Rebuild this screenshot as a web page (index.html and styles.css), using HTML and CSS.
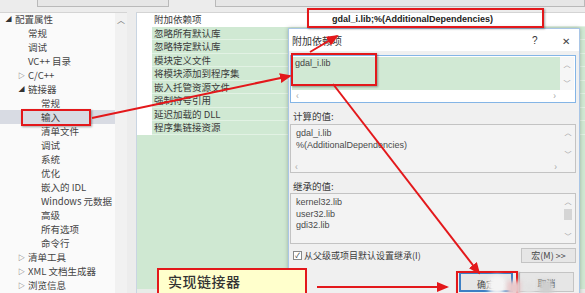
FILE: index.html
```html
<!DOCTYPE html>
<html>
<head>
    <meta charset="utf-8">
    <title>链接器 | 输入</title>
    <link rel="stylesheet" href="styles.css">
</head>

<body>
    <div class="topbar">
        <span class="top-box first"></span>
        <span class="top-box second"></span>
    </div>

    <div class="main">
        <div class="tree">
            <ul class="tree-list">
                <li class="lv0"><span class="tri open">◢</span>配置属性</li>
                <li class="lv1"><span class="tri"></span>常规</li>
                <li class="lv1"><span class="tri"></span>调试</li>
                <li class="lv1"><span class="tri"></span>VC++ 目录</li>
                <li class="lv1"><span class="tri">▷</span>C/C++</li>
                <li class="lv1"><span class="tri open">◢</span>链接器</li>
                <li class="lv2"><span class="tri"></span>常规</li>
                <li class="lv2 selected"><span class="tri"></span>输入</li>
                <li class="lv2"><span class="tri"></span>清单文件</li>
                <li class="lv2"><span class="tri"></span>调试</li>
                <li class="lv2"><span class="tri"></span>系统</li>
                <li class="lv2"><span class="tri"></span>优化</li>
                <li class="lv2"><span class="tri"></span>嵌入的 IDL</li>
                <li class="lv2"><span class="tri"></span>Windows 元数据</li>
                <li class="lv2"><span class="tri"></span>高级</li>
                <li class="lv2"><span class="tri"></span>所有选项</li>
                <li class="lv2"><span class="tri"></span>命令行</li>
                <li class="lv1"><span class="tri">▷</span>清单工具</li>
                <li class="lv1"><span class="tri">▷</span>XML 文档生成器</li>
                <li class="lv1"><span class="tri">▷</span>浏览信息</li>
            </ul>
            <div class="tree-scroll"><span class="arrow-up">︿</span></div>
        </div>

        <div class="grid">
            <div class="row head">
                <span class="indent"></span>
                <span class="name">附加依赖项</span>
                <span class="value"><b>gdal_i.lib;%(AdditionalDependencies)</b></span>
            </div>
            <div class="row"><span class="indent"></span><span class="name">忽略所有默认库</span><span class="value"></span></div>
            <div class="row"><span class="indent"></span><span class="name">忽略特定默认库</span><span class="value"></span></div>
            <div class="row"><span class="indent"></span><span class="name">模块定义文件</span><span class="value"></span></div>
            <div class="row"><span class="indent"></span><span class="name">将模块添加到程序集</span><span class="value"></span></div>
            <div class="row"><span class="indent"></span><span class="name">嵌入托管资源文件</span><span class="value"></span></div>
            <div class="row"><span class="indent"></span><span class="name">强制符号引用</span><span class="value"></span></div>
            <div class="row"><span class="indent"></span><span class="name">延迟加载的 DLL</span><span class="value"></span></div>
            <div class="row"><span class="indent"></span><span class="name">程序集链接资源</span><span class="value"></span></div>
            <div class="grid-fill"></div>
        </div>
    </div>

    <!-- dialog window on top of the property page -->
    <div class="dialog">
        <div class="dlg-title">
            <span class="dlg-caption">附加依赖项</span>
            <span class="dlg-help">?</span>
            <span class="dlg-close">✕</span>
        </div>
        <div class="dlg-body">
            <div class="editbox">
                <div class="edit-text">gdal_i.lib</div>
                <div class="vbar"><span>︿</span><span>﹀</span></div>
                <div class="hbar"><span>‹</span><span>›</span></div>
            </div>

            <div class="dlg-label">计算的值:</div>
            <div class="listbox">
                <div class="list-text">
                    <div>gdal_i.lib</div>
                    <div>%(AdditionalDependencies)</div>
                </div>
                <div class="vbar"><span>︿</span><span>﹀</span></div>
                <div class="hbar"><span>‹</span><span>›</span></div>
            </div>

            <div class="dlg-label">继承的值:</div>
            <div class="listbox inherit">
                <div class="list-text">
                    <div>kernel32.lib</div>
                    <div>user32.lib</div>
                    <div>gdi32.lib</div>
                </div>
                <div class="vbar"><span>︿</span><span class="thumb"></span><span>﹀</span></div>
            </div>

            <div class="check-row">
                <span class="checkbox">✓</span>
                <span class="check-text">从父级或项目默认设置继承(I)</span>
                <span class="btn macro">宏(M) &gt;&gt;</span>
            </div>

            <div class="btn-row">
                <span class="btn default">确定</span>
                <span class="btn">取消</span>
            </div>
        </div>
    </div>

    <!-- annotations -->
    <div class="mark mark-input"></div>
    <div class="mark mark-value"></div>
    <div class="mark mark-edit"></div>
    <div class="mark mark-ok"></div>

    <div class="blob b1"></div>
    <div class="blob b2"></div>
    <div class="blob b3"></div>
    <div class="blob b4"></div>

    <div class="callout">实现链接器</div>

    <svg class="arrows" width="585" height="293" viewBox="0 0 585 293">
        <defs>
            <marker id="head" markerUnits="userSpaceOnUse" markerWidth="12" markerHeight="10" refX="10" refY="5" orient="auto">
                <path d="M0,0 L12,5 L0,10 z" fill="#e3181b"/>
            </marker>
        </defs>
        <line x1="92" y1="118" x2="290" y2="76" marker-end="url(#head)"/>
        <line x1="310" y1="52" x2="337" y2="36" marker-end="url(#head)"/>
        <line x1="333" y1="84" x2="479" y2="273" marker-end="url(#head)"/>
        <line x1="317" y1="287" x2="447" y2="287" marker-end="url(#head)"/>
    </svg>
</body>
</html>
```

FILE: styles.css
```css
* {
    margin: 0;
    padding: 0;
    box-sizing: border-box;
}

body {
    width: 585px;
    height: 293px;
    overflow: hidden;
    position: relative;
    background: #ececec;
    font-family: "Noto Sans CJK SC", "Liberation Sans", sans-serif;
    font-size: 9.5px;
    color: #3a3a3a;
}

.topbar {
    height: 12px;
    display: flex;
    align-items: flex-start;
}
.top-box {
    height: 7px;
    border: 1px solid #b9b9b9;
    border-top: none;
    background: #e6e6e6;
}
.top-box.first {
    margin-left: 37px;
    width: 132px;
}
.top-box.second {
    margin-left: 46px;
    flex: 1;
}

.main {
    display: flex;
    height: 281px;
}

/* tree */
.tree {
    width: 127px;
    display: flex;
    background: #fafafa;
    border-top: 1px solid #d4d4d4;
}
.tree-list {
    list-style: none;
    width: 115px;
    margin-top: -1px;
}
.tree-list li {
    height: 14px;
    line-height: 14px;
    white-space: nowrap;
    display: flex;
    color: #444;
}
.tree-list li.lv0 { padding-left: 2px; }
.tree-list li.lv1 { padding-left: 15px; }
.tree-list li.lv2 { padding-left: 28px; }
.tree-list li.selected {
    background: #d8dbe3;
}
.tri {
    width: 13px;
    font-size: 7px;
    color: #555;
    text-align: center;
}
.tri.open {
    font-size: 6px;
    color: #333;
}
.tree-scroll {
    width: 12px;
    background: #f1f1f1;
    text-align: center;
}
.arrow-up {
    display: block;
    font-size: 8px;
    color: #777;
    line-height: 14px;
}

/* property grid */
.grid {
    flex: 1;
    margin-left: 9px;
    display: flex;
    flex-direction: column;
    background: #fff;
    border-left: 1px solid #c9d5e2;
    border-top: 1px solid #d4d4d4;
}
.row {
    height: 13.5px;
    display: flex;
    line-height: 13px;
}
.row .indent {
    width: 15px;
    background: #fff;
}
.row .name {
    width: 156px;
    padding-left: 2px;
    background: #d0e9d3;
    border-bottom: 1px solid #e2f2e4;
    border-right: 1px solid #e2f2e4;
    white-space: nowrap;
}
.row .value {
    flex: 1;
    background: #d0e9d3;
    border-bottom: 1px solid #e2f2e4;
}
.row.head .name {
    background: #fff;
    border-color: #fff;
}
.row.head .value {
    background: #fff;
    padding-left: 24px;
    font-family: "Liberation Sans", sans-serif;
    font-size: 9px;
    color: #222;
}
.grid-fill {
    flex: 1;
    background: #cfe8d2;
    border-bottom: 4px solid #e8ece8;
}

/* dialog */
.dialog {
    position: absolute;
    left: 288px;
    top: 28px;
    width: 292px;
    height: 272px;
    background: #f0f0f0;
    border: 1px solid #a9c6e6;
    box-shadow: 0 0 4px rgba(0, 0, 0, 0.25);
}
.dlg-title {
    height: 22px;
    background: #fff;
    display: flex;
    align-items: center;
    padding-left: 3px;
    font-size: 10px;
    color: #333;
}
.dlg-caption {
    flex: 1;
}
.dlg-help {
    font-family: "Liberation Sans", sans-serif;
    font-size: 10px;
    width: 30px;
}
.dlg-close {
    font-size: 10px;
    width: 17px;
    color: #444;
}
.dlg-body {
    padding: 4px 3px 0 1px;
}

.editbox {
    height: 48px;
    border: 1px solid #84b5e6;
    background: #fff;
    padding: 1px;
    display: grid;
    grid-template-columns: 1fr 14px;
    grid-template-rows: 1fr 11px;
}
.edit-text {
    background: #d1e9d4;
    padding: 1px 3px;
    font-family: "Liberation Sans", sans-serif;
    font-size: 9px;
    color: #444;
}
.vbar {
    display: flex;
    flex-direction: column;
    justify-content: space-between;
    align-items: center;
    font-size: 7px;
    color: #9a9a9a;
    padding: 2px 0;
    background: #f6f6f6;
}
.hbar {
    grid-column: 1 / 3;
    display: flex;
    justify-content: space-between;
    padding: 0 18px 0 4px;
    font-size: 10px;
    line-height: 10px;
    color: #aaa;
}

.dlg-label {
    margin-top: 7px;
    height: 12px;
    line-height: 12px;
    padding-left: 3px;
}

.listbox {
    height: 49px;
    margin-top: 2px;
    border: 1px solid #c3c3c3;
    background: #f3f3f3;
    display: grid;
    grid-template-columns: 1fr 14px;
    grid-template-rows: 1fr 11px;
}
.listbox.inherit {
    height: 51px;
    margin-top: 1px;
    grid-template-rows: 1fr;
}
.list-text {
    padding: 3px 5px;
    font-family: "Liberation Sans", sans-serif;
    font-size: 9px;
    line-height: 11.5px;
    color: #4a4a4a;
}
.listbox .vbar {
    background: #f3f3f3;
}
.vbar .thumb {
    width: 8px;
    height: 11px;
    background: #d5d5d5;
    margin-top: -8px;
}

.check-row {
    margin-top: 4px;
    display: flex;
    align-items: center;
    height: 15px;
    padding-left: 3px;
}
.checkbox {
    width: 9px;
    height: 9px;
    border: 1px solid #888;
    background: #fff;
    font-size: 7px;
    line-height: 7px;
    text-align: center;
    color: #333;
}
.check-text {
    flex: 1;
    margin-left: 2px;
    font-size: 9px;
}
.btn {
    width: 55px;
    height: 15px;
    border: 1px solid #c4c4c4;
    background: #e6e6e6;
    text-align: center;
    line-height: 13px;
    font-size: 9px;
    color: #444;
}
.btn-row {
    margin-top: 9px;
    display: flex;
    justify-content: flex-end;
    gap: 6px;
    padding-right: 2px;
}
.btn-row .btn {
    height: 20px;
    line-height: 22px;
}
.btn.default {
    border: 2px solid #3c7fc4;
    width: 54px;
}

/* red marks */
.mark {
    position: absolute;
    border: 2px solid #e3181b;
    box-shadow: 1px 1px 2px rgba(0, 0, 0, 0.35);
}
.mark-input {
    left: 21px;
    top: 109px;
    width: 70px;
    height: 17px;
}
.mark-value {
    left: 307px;
    top: 8px;
    width: 237px;
    height: 20px;
}
.mark-edit {
    left: 291px;
    top: 53px;
    width: 86px;
    height: 33px;
}
.mark-ok {
    left: 456px;
    top: 271px;
    width: 62px;
    height: 26px;
}

.blob {
    position: absolute;
    filter: blur(2px);
}
.b1 {
    left: 487px;
    top: 275px;
    width: 20px;
    height: 20px;
    border-radius: 50%;
    background: #f4f4f4;
}
.b2 {
    left: 507px;
    top: 281px;
    width: 14px;
    height: 14px;
    background: #e9c9cb;
}
.b3 {
    left: 524px;
    top: 283px;
    width: 10px;
    height: 10px;
    background: #e2e2e2;
}
.b4 {
    left: 539px;
    top: 280px;
    width: 14px;
    height: 14px;
    background: #cfcfcf;
}

.callout {
    position: absolute;
    left: 157px;
    top: 268px;
    width: 150px;
    height: 25px;
    background: #ffffcc;
    border: 2px solid #e3181b;
    border-bottom: none;
    padding-left: 9px;
    font-size: 14px;
    line-height: 22px;
    font-weight: 500;
    color: #333;
    letter-spacing: 0.5px;
}

.arrows {
    position: absolute;
    left: 0;
    top: 0;
    pointer-events: none;
}
.arrows line {
    stroke: #e3181b;
    stroke-width: 2;
}
```
